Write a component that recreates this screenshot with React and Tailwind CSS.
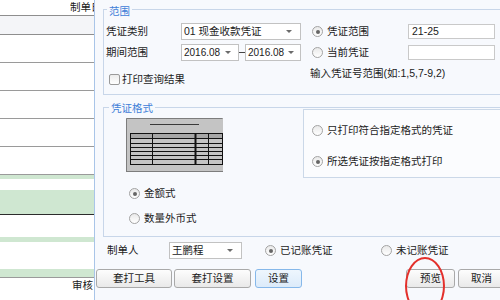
import React from "react";

const Radio = ({ checked }) => (
  <span className="w-[11px] h-[11px] shrink-0 rounded-full border border-[#a3a3a3] bg-linear-to-b from-[#e9e9e9] to-white flex items-center justify-center">
    {checked && <span className="w-[4px] h-[4px] rounded-full bg-[#666]" />}
  </span>
);

const Arrow = () => (
  <span className="w-0 h-0 shrink-0 border-l-[3px] border-r-[3px] border-t-[3px] border-l-transparent border-r-transparent border-t-[#6b6b6b]" />
);

const Select = ({ w, pr = "pr-[8px]", children }) => (
  <div className={`${w} ${pr} h-[17px] shrink-0 border border-[#c2c2c2] bg-white flex items-center justify-between pl-[2px]`}>
    <span className="whitespace-nowrap">{children}</span>
    <Arrow />
  </div>
);

const Btn = ({ w, ml, active, children }) => (
  <div
    className={`${w} ${ml} h-[19px] shrink-0 rounded-[3px] border flex items-center justify-center ${
      active
        ? "border-[#86b8ea] bg-linear-to-b from-[#eef6fd] to-[#dcebfa]"
        : "border-[#a9a9a9] bg-linear-to-b from-[#fdfdfd] to-[#e9e9e9]"
    }`}
  >
    {children}
  </div>
);

// little picture of the voucher layout
const VoucherThumb = () => (
  <svg width="97" height="54" viewBox="0 0 97 54" className="block">
    <rect x="0" y="0" width="97" height="54" fill="#c4c4c4" />
    <path d="M0.5 0.5 H96.5 M0.5 0.5 V53.5 M0 53.5 H97" stroke="#7d7d7d" />
    <path d="M24 6.5 H73" stroke="#3a3a3a" />
    <rect x="4" y="15" width="92" height="5" fill="#a6a6a6" />
    <rect x="4.5" y="15.5" width="92" height="31" fill="none" stroke="#111" />
    {[20.5, 25.5, 29.5, 33.5, 37.5, 41.5].map((y) => (
      <path key={y} d={`M4.5 ${y} H96.5`} stroke="#111" />
    ))}
    <path d="M26.5 15.5 V46.5 M82.5 15.5 V46.5" stroke="#111" />
    <path d="M69.5 15.5 V46.5" stroke="#111" strokeWidth="2" />
  </svg>
);

const leftRows = [
  { h: "h-[18px]", bg: "bg-[#f4f5f8]", line: "border-b border-[#8e8e8e]" },
  { h: "h-[27px]", bg: "bg-white", line: "border-b border-[#9a9a9a]" },
  { h: "h-[27px]", bg: "bg-white", line: "border-b border-[#9a9a9a]" },
  { h: "h-[27px]", bg: "bg-white", line: "border-b border-[#9a9a9a]" },
  { h: "h-[27px]", bg: "bg-white", line: "border-b border-[#9a9a9a]" },
  { h: "h-[27px]", bg: "bg-white", line: "border-b border-[#9a9a9a]" },
  { h: "h-[4px]", bg: "bg-[#cfe7d1]", line: "" },
  { h: "h-[11px]", bg: "bg-white", line: "" },
  { h: "h-[24px]", bg: "bg-[#cfe7d1]", line: "border-b border-[#2c2c2c]" },
  { h: "h-[22px]", bg: "bg-white", line: "" },
  { h: "h-[5px]", bg: "bg-[#cfe7d1]", line: "" },
  { h: "h-[27px]", bg: "bg-white", line: "" },
  { h: "h-[8px]", bg: "bg-[#cfe7d1]", line: "border-b border-[#9a9a9a]" },
];

export default function App() {
  return (
    <div className="w-[500px] h-[300px] flex overflow-hidden relative bg-white text-[10.5px] leading-none text-[#1b1b1b] font-[family-name:'Liberation_Sans','Noto_Sans_CJK_SC',sans-serif]">
      {/* background table behind the dialog */}
      <div className="w-[95px] shrink-0 border-r border-[#a9c5e8] flex flex-col overflow-hidden">
        <div className="h-[14px] shrink-0 box-content border-b border-[#8e8e8e] flex justify-end pt-[1px] leading-[12px]">
          <span className="w-[24px] overflow-hidden whitespace-nowrap">制单日</span>
        </div>
        {leftRows.map((r, i) => (
          <div key={i} className={`${r.h} ${r.bg} ${r.line} shrink-0 box-content`} />
        ))}
        <div className="flex-1 pl-[72px] pt-[1px] whitespace-nowrap leading-[12px]">审核</div>
      </div>

      {/* print dialog */}
      <div className="flex-1 bg-[#f7f9fd] flex flex-col overflow-hidden">
        {/* 范围 */}
        <div className="relative mt-[9px] ml-[8px] w-[410px] h-[86px] shrink-0 border border-[#c8d6e9] pt-[13px]">
          <span className="absolute -top-[5px] left-[3px] px-[2px] bg-[#f7f9fd] text-[#3f80d8] leading-[12px]">范围</span>
          <div className="flex items-center h-[17px]">
            <span className="ml-[2px] w-[75px] shrink-0">凭证类别</span>
            <Select w="w-[120px]">01 现金收款凭证</Select>
            <div className="ml-[11px] w-[96px] shrink-0 flex items-center gap-[4px]">
              <Radio checked />
              <span>凭证范围</span>
            </div>
            <div className="w-[87px] h-[15px] shrink-0 bg-white border border-[#c9c9c9] flex items-center pl-[3px]">21-25</div>
          </div>
          <div className="flex items-center h-[17px] mt-[4px]">
            <span className="ml-[2px] w-[75px] shrink-0">期间范围</span>
            <Select w="w-[58px]" pr="pr-[7px]">
              <span className="text-[10px]">2016.08</span>
            </Select>
            <span className="w-[6px] h-[1px] bg-[#444] shrink-0" />
            <Select w="w-[56px]" pr="pr-[6px]">
              <span className="text-[10px]">2016.08</span>
            </Select>
            <div className="ml-[11px] w-[96px] shrink-0 flex items-center gap-[4px]">
              <Radio />
              <span>当前凭证</span>
            </div>
            <div className="w-[87px] h-[15px] shrink-0 bg-white border border-[#c9c9c9]" />
          </div>
          <div className="flex mt-[6px]">
            <div className="w-[206px] shrink-0 flex items-center gap-[2px] pl-[5px] pt-[7px]">
              <span className="w-[11px] h-[11px] rounded-[2px] border border-[#9a9a9a] bg-linear-to-b from-[#ececec] to-white" />
              <span>打印查询结果</span>
            </div>
            <span className="leading-[12px] whitespace-nowrap">输入凭证号范围(如:1,5,7-9,2)</span>
          </div>
        </div>

        {/* 凭证格式 */}
        <div className="relative mt-[12px] ml-[8px] w-[410px] h-[130px] shrink-0 border border-[#c8d6e9] flex">
          <span className="absolute -top-[6px] left-[5px] px-[2px] bg-[#f7f9fd] text-[#3f80d8] leading-[12px]">凭证格式</span>
          <div className="w-[199px] shrink-0 flex flex-col">
            <div className="ml-[22px] mt-[10px]">
              <VoucherThumb />
            </div>
            <div className="ml-[25px] mt-[16px] flex items-center gap-[4px]">
              <Radio checked />
              <span>金额式</span>
            </div>
            <div className="ml-[25px] mt-[14px] flex items-center gap-[4px]">
              <Radio />
              <span>数量外币式</span>
            </div>
          </div>
          <div className="flex-1 mt-[1px] h-[69px] border border-[#cbd8e8] bg-[#fbfcfe] pl-[8px] pt-[15px] flex flex-col">
            <div className="flex items-center gap-[4px]">
              <Radio />
              <span>只打印符合指定格式的凭证</span>
            </div>
            <div className="flex items-center gap-[4px] mt-[20px]">
              <Radio checked />
              <span>所选凭证按指定格式打印</span>
            </div>
          </div>
        </div>

        {/* 制单人 */}
        <div className="flex items-center h-[17px] mt-[5px] shrink-0">
          <span className="ml-[12px] w-[62px] shrink-0">制单人</span>
          <Select w="w-[73px]">王鹏程</Select>
          <div className="ml-[23px] w-[116px] shrink-0 flex items-center gap-[4px]">
            <Radio checked />
            <span>已记账凭证</span>
          </div>
          <div className="flex items-center gap-[4px]">
            <Radio />
            <span>未记账凭证</span>
          </div>
        </div>

        {/* buttons */}
        <div className="flex mt-[10px] shrink-0">
          <Btn w="w-[76px]" ml="ml-[1px]">套打工具</Btn>
          <Btn w="w-[77px]" ml="ml-[2px]">套打设置</Btn>
          <Btn w="w-[47px]" ml="ml-[4px]" active>设置</Btn>
          <Btn w="w-[49px]" ml="ml-[104px]">预览</Btn>
          <Btn w="w-[47px]" ml="ml-[3px]">取消</Btn>
        </div>
      </div>

      {/* red hand-drawn circle */}
      <div className="absolute left-[405px] top-[257px] w-[40px] h-[58px] rounded-[50%] border-2 border-[#e3302c]" />
    </div>
  );
}
